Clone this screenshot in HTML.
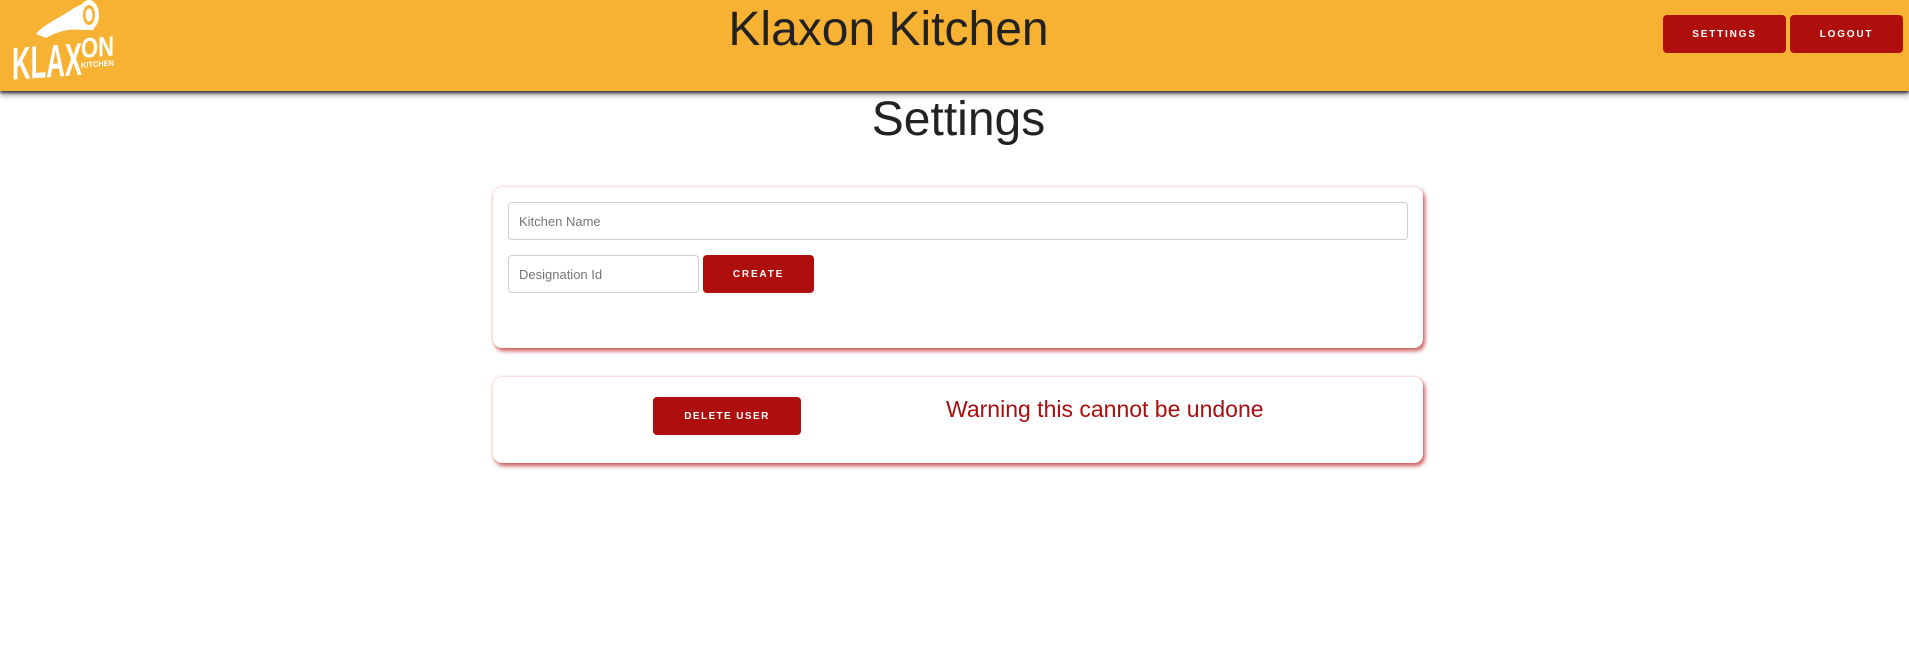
<!DOCTYPE html>
<html><head><meta charset="utf-8"><style>
*{box-sizing:border-box;margin:0;padding:0}
html,body{width:1909px;height:654px;background:#fff;font-family:"Liberation Sans",Arial,sans-serif;overflow:hidden;position:relative}
.hdr{position:absolute;left:0;top:0;width:1909px;height:91px;background:#f7b233;box-shadow:0 2px 3px rgba(0,0,0,.75),0 5px 6px rgba(0,0,0,.25)}
.title{position:absolute;left:0;width:1777px;text-align:center;top:2px;font-size:48px;color:#222;line-height:56px}
.btn{position:absolute;background:#ae0f0d;color:#fff;font-weight:bold;font-size:10px;letter-spacing:1.8px;border-radius:4px;display:flex;align-items:center;justify-content:center}
.h2{position:absolute;left:0;width:1917px;text-align:center;top:92px;font-size:48px;color:#222;line-height:56px}
.card{position:absolute;background:#fff;border-radius:9px;box-shadow:2px 3px 4px rgba(190,40,40,.75),0 0 3px rgba(220,80,80,.35)}
.inp{position:absolute;border:1px solid #cfcfcf;border-radius:4px;font-size:13px;color:#757575;padding-left:10px;display:flex;align-items:center}
.warn{position:absolute;left:946px;top:396px;font-size:23px;color:#a90e0e}
</style></head><body>
<div class="hdr">
<svg style="position:absolute;left:8px;top:0" width="110" height="80" viewBox="0 0 110 80">
<path d="M28 34 C36 24 52 18 66 8 L78 2 L86 30 L74 30 C62 28 48 32 38 38 Z" fill="#fff"/>
<ellipse cx="81" cy="15" rx="10" ry="15" fill="#fff"/>
<ellipse cx="81" cy="15" rx="6" ry="10" fill="#f7b233"/>
<ellipse cx="81" cy="15" rx="3.5" ry="6.5" fill="#fff"/>
<g transform="skewY(-4)">
<text x="4" y="80" font-family="Liberation Sans" font-weight="bold" font-size="46" fill="#fff" textLength="70" lengthAdjust="spacingAndGlyphs">KLAX</text>
<text x="73" y="63" font-family="Liberation Sans" font-weight="bold" font-size="28" fill="#fff" textLength="33" lengthAdjust="spacingAndGlyphs">ON</text>
<text x="73" y="73" font-family="Liberation Sans" font-weight="bold" font-size="8" fill="#fff" textLength="33" lengthAdjust="spacingAndGlyphs">KITCHEN</text>
</g>
</svg>
<div class="title">Klaxon Kitchen</div>
<div class="btn" style="left:1663px;top:15px;width:123px;height:38px">SETTINGS</div>
<div class="btn" style="left:1790px;top:15px;width:113px;height:38px">LOGOUT</div>
</div>
<div class="h2">Settings</div>
<div class="card" style="left:493px;top:187px;width:930px;height:161px"></div>
<div class="inp" style="left:508px;top:202px;width:900px;height:38px">Kitchen Name</div>
<div class="inp" style="left:508px;top:255px;width:191px;height:38px">Designation Id</div>
<div class="btn" style="left:703px;top:255px;width:111px;height:38px">CREATE</div>
<div class="card" style="left:493px;top:377px;width:930px;height:86px"></div>
<div class="btn" style="left:653px;top:397px;width:148px;height:38px;letter-spacing:1.4px">DELETE USER</div>
<div class="warn">Warning this cannot be undone</div>
</body></html>
